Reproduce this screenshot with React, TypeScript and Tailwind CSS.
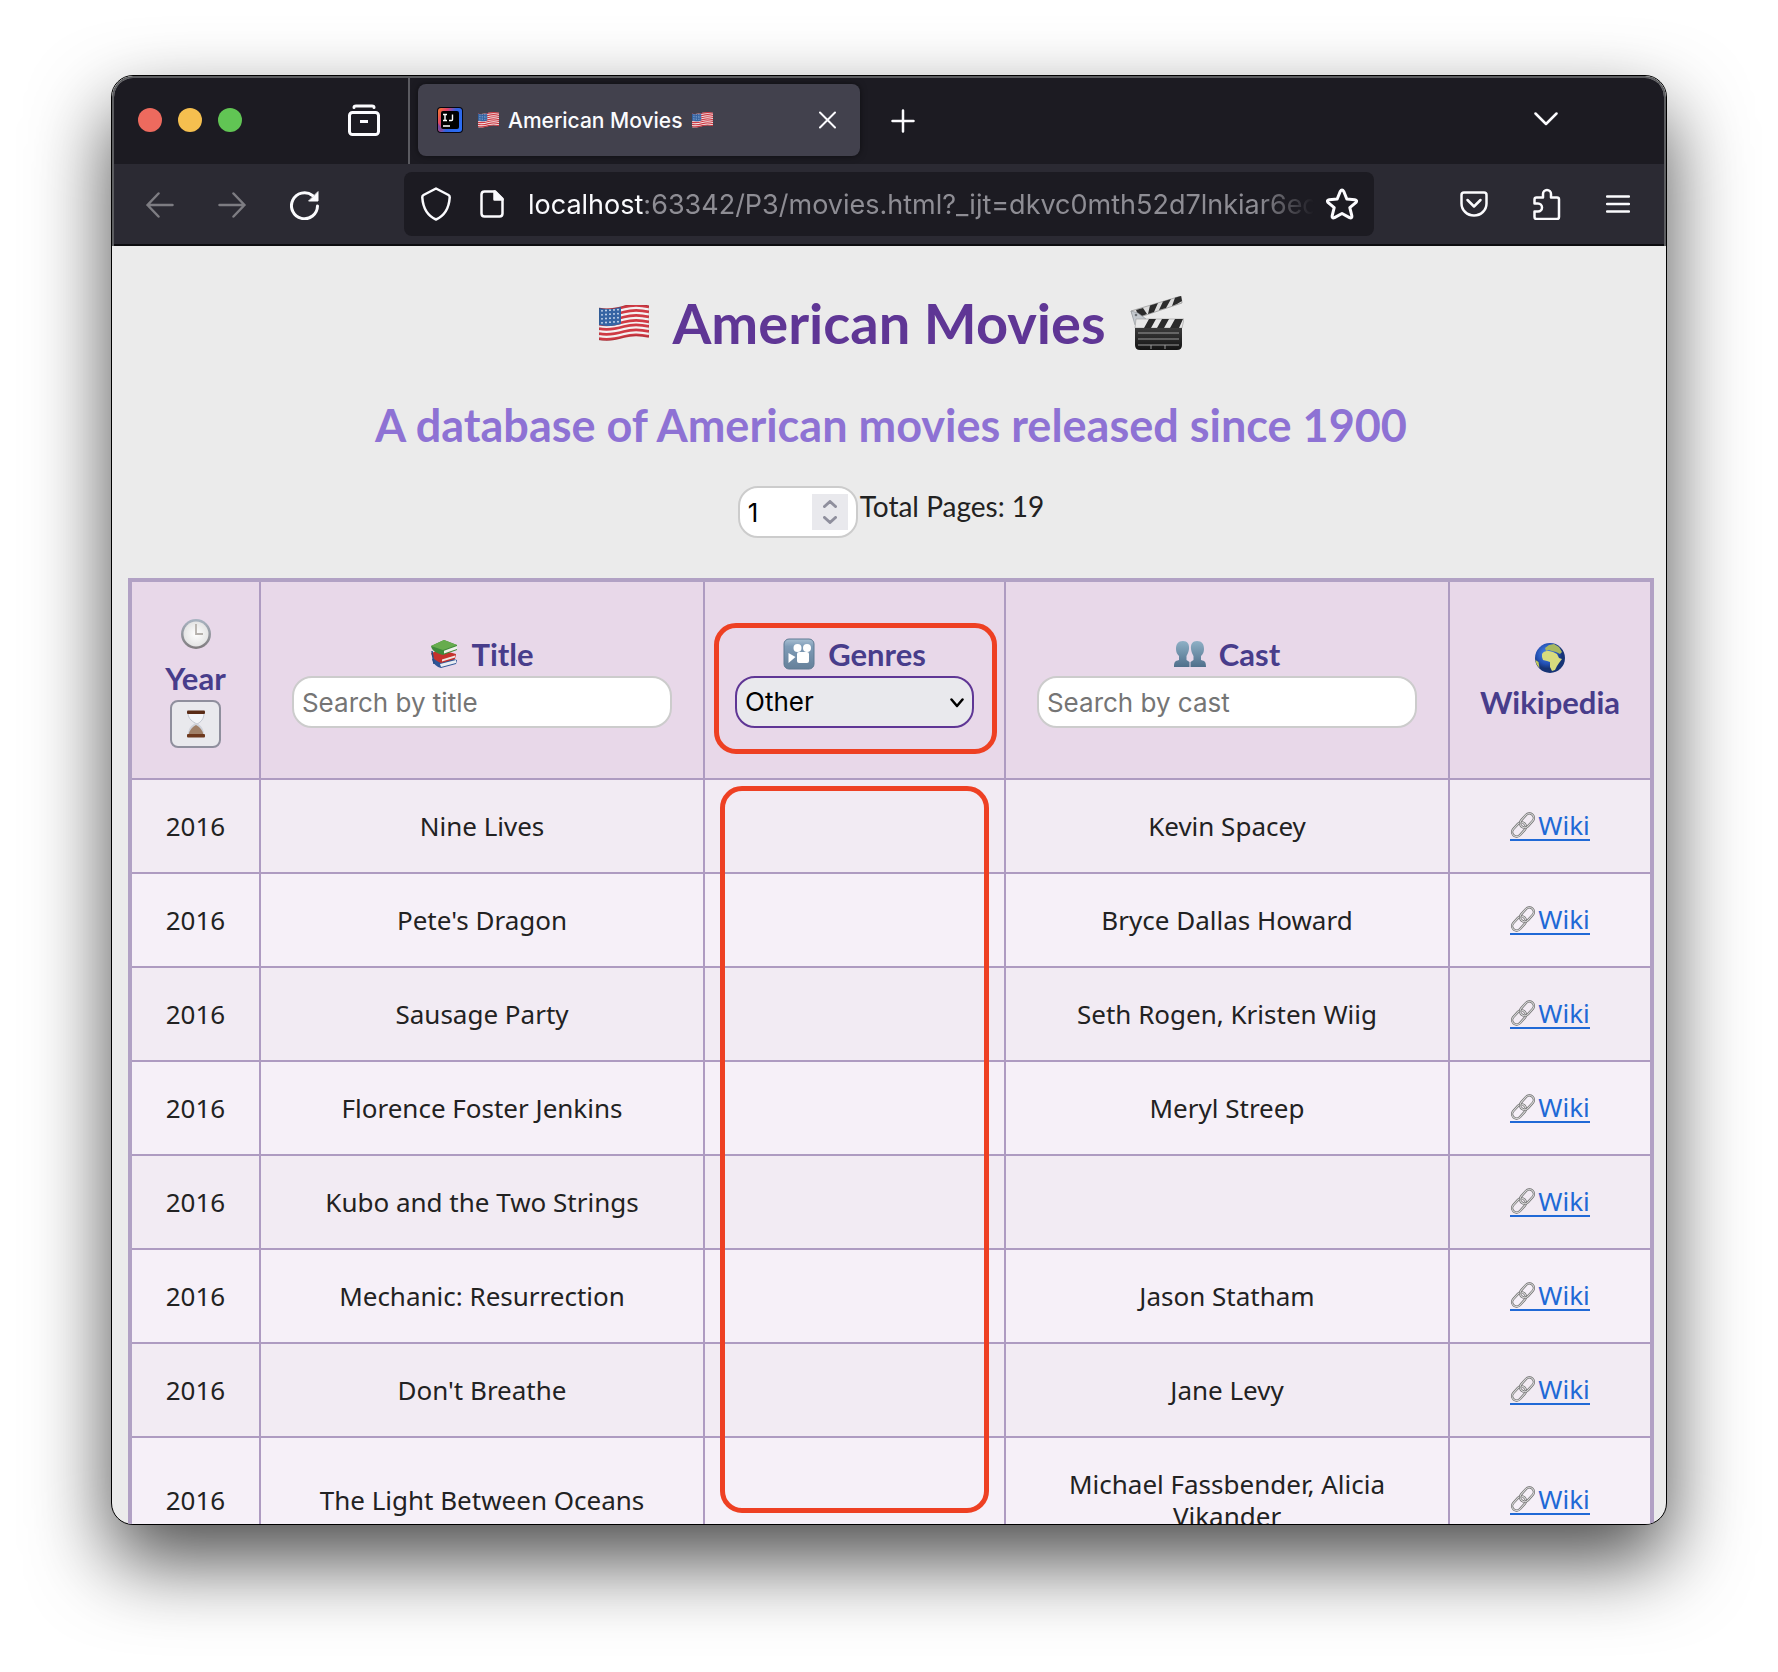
import React from "react";

const COMIC = "font-['Comic_Sans_MS',Lato,sans-serif]";
const UI = "font-[Inter,sans-serif]";

const movies = [
  { title: "Nine Lives", cast: "Kevin Spacey" },
  { title: "Pete's Dragon", cast: "Bryce Dallas Howard" },
  { title: "Sausage Party", cast: "Seth Rogen, Kristen Wiig" },
  { title: "Florence Foster Jenkins", cast: "Meryl Streep" },
  { title: "Kubo and the Two Strings", cast: "" },
  { title: "Mechanic: Resurrection", cast: "Jason Statham" },
  { title: "Don't Breathe", cast: "Jane Levy" },
  { title: "The Light Between Oceans", cast: "Michael Fassbender, Alicia Vikander" },
];

function Stroke({ w, h, children, width = 2, className = "" }: { w: number; h: number; children: React.ReactNode; width?: number; className?: string }) {
  return (
    <svg
      width={w}
      height={h}
      viewBox={`0 0 ${w} ${h}`}
      fill="none"
      stroke="currentColor"
      strokeWidth={width}
      strokeLinecap="round"
      strokeLinejoin="round"
      aria-hidden="true"
      className={`shrink-0 ${className}`}
    >
      {children}
    </svg>
  );
}

function Flag({ className }: { className: string }) {
  const stripe = (x: number, y: number) => `M0 ${y + 3} C ${x} ${y + 5}, 18 ${y + 3}, 25 ${y + 1} S 42 ${y - 1}, 50 ${y + 1}`;
  return (
    <svg viewBox="0 0 50 36" className={className} role="img" aria-label="Flag of the United States">
      <path d="M0 3C8 5 18 3 25 1S42-1 50 1V32C42 30 32 30 25 32S8 37 0 35Z" fill="#f4f1f2" />
      <g fill="none" stroke="#cf3a44" strokeWidth="2.8">
        {[1, 6, 11, 16, 20.5, 25.5, 30.5].map((y) => (
          <path key={y} d={stripe(8, y)} />
        ))}
      </g>
      <path d="M0 3C8 5 15 4 22 2V19C15 21 8 22 0 20Z" fill="#3564a3" />
      <g fill="#d9e4f4">
        {[6, 10, 14, 18].map((y) =>
          [3, 7, 11, 15, 19].map((x) => <circle key={`${x}-${y}`} cx={x} cy={y - x / 14} r="0.9" />)
        )}
      </g>
      <path d="M0 3C8 5 18 3 25 1S42-1 50 1V32C42 30 32 30 25 32S8 37 0 35Z" fill="none" stroke="#00000030" strokeWidth="0.8" />
    </svg>
  );
}

function Clapper() {
  return (
    <svg viewBox="0 0 54 54" className="size-[54px]" role="img" aria-label="Clapper board">
      <defs>
        <linearGradient id="slate" x1="0" y1="0" x2="0" y2="1">
          <stop offset="0" stopColor="#3a3a3a" />
          <stop offset="1" stopColor="#141414" />
        </linearGradient>
      </defs>
      <path d="M1 15 51 0l1 7L4 23Z" fill="#dcdcdc" stroke="#9b9b9b" strokeWidth="0.8" />
      <path d="M6 14l7-2 4 6-8 3ZM20 9.500l8-2.500-4 9-6 2ZM33 5.500l8-2.500-5 9-7 2ZM45 1.800l6-1.800 1 5-5 3-5 2Z" fill="#2b2b2b" />
      <path d="M1 15 8 17 16 23 14 29H5Z" fill="#c4c9ce" stroke="#8a8f94" strokeWidth="0.600" />
      <circle cx="6" cy="19" r="1.300" fill="#6d7277" />
      <circle cx="9" cy="26" r="1.300" fill="#6d7277" />
      <path d="M6 23h48l-2 9H5Z" fill="#e8e8e8" stroke="#9b9b9b" strokeWidth="0.600" />
      <path d="M19 23h7l-5 9h-7ZM32 23h7l-5 9h-7ZM45 23h8l-4 9h-9Z" fill="#2b2b2b" />
      <path d="M5 32h47v17q0 5-5 5H10q-5 0-5-5Z" fill="url(#slate)" />
      <path d="M8 37h41M8 43h41M8 49h41M21 49v4M35 49v4" stroke="#9a9a9a" strokeWidth="1" />
    </svg>
  );
}

function Clock() {
  return (
    <svg viewBox="0 0 32 32" className="size-8" role="img" aria-label="Clock">
      <defs>
        <linearGradient id="clockRim" x1="0" y1="0" x2="0" y2="1">
          <stop offset="0" stopColor="#a9b4c2" />
          <stop offset="1" stopColor="#7f7b7d" />
        </linearGradient>
        <radialGradient id="clockFace">
          <stop offset="0" stopColor="#ffffff" />
          <stop offset="1" stopColor="#e4e4e4" />
        </radialGradient>
      </defs>
      <circle cx="16" cy="16" r="15" fill="url(#clockRim)" />
      <circle cx="16" cy="16" r="12.5" fill="url(#clockFace)" />
      <path d="M16 6v10h7" fill="none" stroke="#b5b1ac" strokeWidth="1.8" />
    </svg>
  );
}

function Hourglass() {
  return (
    <svg viewBox="0 0 20 28" className="h-7 w-5" role="img" aria-label="Sort by year">
      <path d="M2 3h16c0 6-3 9-7 11-4-2-9-5-9-11Z" fill="#f3f5f8" stroke="#b9bec8" strokeWidth="0.8" />
      <path d="M10 13c5 2 8 6 8 12H2c0-6 3-10 8-12Z" fill="#cfd2da" />
      <path d="M10 15c4 2 6.500 5 7.500 10h-15c1-5 3.500-8 7.500-10Z" fill="#a08068" />
      <rect x="1" y="0.500" width="18" height="3.500" rx="1" fill="#5a2c16" />
      <rect x="1" y="24" width="18" height="3.500" rx="1" fill="#6d381d" />
    </svg>
  );
}

function Books() {
  return (
    <svg viewBox="0 0 28 28" className="size-7" role="img" aria-label="Books">
      <path d="M2 19l10-3 15 4-1 4-15 4C7 27 3 24 2 19Z" fill="#2f5596" />
      <path d="M10 24l16-4v3l-15 4Z" fill="#e8edf2" />
      <path d="M1 13l10-3 15 4-1 5-14 4C6 21 2 18 1 13Z" fill="#c5322d" />
      <path d="M12 19.500l13-4v2l-13 4Z" fill="#f2e5e0" />
      <path d="M1 6 14 0l13 5v5l-14 5C6 13 2 11 1 6Z" fill="#3f8a3a" />
      <path d="M1 6 14 0l13 5-14 5Z" fill="#67ac4e" />
      <path d="M14 10.800 27 6v3l-13 4.500Z" fill="#eef2ea" />
      <path d="M2 11l2 13" stroke="#284b86" strokeWidth="1.500" />
    </svg>
  );
}

function Cinema() {
  return (
    <svg viewBox="0 0 32 32" className="size-8" role="img" aria-label="Cinema">
      <defs>
        <linearGradient id="cinemaTile" x1="0" y1="0" x2="0" y2="1">
          <stop offset="0" stopColor="#a8bfd2" />
          <stop offset="0.250" stopColor="#7f9cb7" />
          <stop offset="1" stopColor="#65809a" />
        </linearGradient>
      </defs>
      <rect x="1" y="1" width="30" height="30" rx="5" fill="url(#cinemaTile)" stroke="#5f7a93" />
      <g fill="#fff">
        <circle cx="14.500" cy="10" r="4" />
        <circle cx="24" cy="10" r="4" />
        <rect x="14" y="14" width="12" height="11" rx="2" />
        <path d="M5.500 15l7 4-7 6Z" />
      </g>
    </svg>
  );
}

function People() {
  return (
    <svg viewBox="0 0 32 26" className="h-[26px] w-8" role="img" aria-label="People">
      <defs>
        <linearGradient id="bust" x1="0" y1="0" x2="0" y2="1">
          <stop offset="0" stopColor="#8fb0c6" />
          <stop offset="1" stopColor="#4f6f8b" />
        </linearGradient>
      </defs>
      <path d="M9 0c4.500 0 6.500 3 6 8-.3 3-1.500 5-2.500 7v4l3 2v5H0c0-5 1-6 5-7v-4C3 13 2 11 2 8 2 3 4 0 9 0Z" fill="url(#bust)" />
      <path d="M23 0c-4.500 0-6.500 3-6 8 .3 3 1.500 5 2.500 7v4l-3 2v5H32c0-5-1-6-5-7v-4c2-2 3-4 3-7 0-5-2-8-7-8Z" fill="url(#bust)" />
    </svg>
  );
}

function Globe() {
  return (
    <svg viewBox="0 0 32 32" className="size-8" role="img" aria-label="Globe">
      <defs>
        <radialGradient id="ocean" cx="0.400" cy="0.350">
          <stop offset="0" stopColor="#4f8df0" />
          <stop offset="0.700" stopColor="#2350b4" />
          <stop offset="1" stopColor="#173475" />
        </radialGradient>
      </defs>
      <circle cx="16" cy="16" r="15" fill="url(#ocean)" />
      <path d="M8 12c2-3 4-3 7-3l4 1 4 2 2 4 3 1-3 4-2 3-2 4-3 1-2-4v-5l-3-1-4-1-1-3Z" fill="#d8dc7e" />
      <path d="M11 6l4-3 5-1 5 3 3 5-2 2-4-2-4-1-3-1-3 1Z" fill="#a8b860" />
      <path d="M1.500 18l3 2 1 6c-2-2-4-5-4-8Z" fill="#c3c95a" />
    </svg>
  );
}

function LinkIcon() {
  return (
    <svg viewBox="0 0 26 26" className="size-[26px]" aria-hidden="true">
      <g fill="none" transform="rotate(-48 13 13)">
        <rect x="-1" y="8.500" width="16" height="9" rx="4.500" stroke="#6a6a6a" strokeWidth="2.400" />
        <rect x="-1" y="8.500" width="16" height="9" rx="4.500" stroke="#d8d8d8" strokeWidth="1.100" />
        <rect x="11" y="8.500" width="16" height="9" rx="4.500" stroke="#6a6a6a" strokeWidth="2.400" />
        <rect x="11" y="8.500" width="16" height="9" rx="4.500" stroke="#d8d8d8" strokeWidth="1.100" />
      </g>
    </svg>
  );
}

function Favicon() {
  return (
    <svg viewBox="0 0 26 26" className="size-[26px] shrink-0" aria-hidden="true">
      <defs>
        <linearGradient id="ideaEdge" x1="0" y1="0.200" x2="1" y2="0.700">
          <stop offset="0" stopColor="#f2703a" />
          <stop offset="0.250" stopColor="#e0416b" />
          <stop offset="0.550" stopColor="#2f62e0" />
          <stop offset="1" stopColor="#2a6df5" />
        </linearGradient>
      </defs>
      <rect width="26" height="26" rx="4" fill="#05060f" />
      <rect x="1" y="1" width="24" height="24" rx="3" fill="url(#ideaEdge)" />
      <path d="M1 16l5 8H4q-3 0-3-3Z" fill="#7a4a9c" />
      <rect x="4" y="4" width="18" height="18" rx="2" fill="#000" />
      <path d="M6 7.500h4M8 7.500v6M6 13.500h4M12 13.500h2.500q1 0 1-1v-5M6 19h7" stroke="#fff" strokeWidth="1.400" fill="none" />
    </svg>
  );
}

function TabStrip() {
  return (
    <div className="flex h-[86px] items-stretch bg-[#1c1b22]">
      <div className="flex w-[296px] shrink-0 items-center border-r-2 border-[#5b5b61] pr-7 pb-[2px] pl-6">
        <div className="flex gap-4">
          <button aria-label="Close window" className="size-6 rounded-full bg-[#ed6a5e]" />
          <button aria-label="Minimize window" className="size-6 rounded-full bg-[#f5bf4f]" />
          <button aria-label="Zoom window" className="size-6 rounded-full bg-[#61c554]" />
        </div>
        <button aria-label="Recent browsing" className="ml-auto">
          <Stroke w={32} h={32} width={3}>
            <path d="M6 3.500Q6 2 8 2h16q2 0 2 1.500" />
            <rect x="1.500" y="8.500" width="29" height="22" rx="3" />
            <path d="M12 17.500h8" strokeLinecap="butt" />
          </Stroke>
        </button>
      </div>
      <div className="mt-[6px] mb-2 ml-2 flex w-[442px] items-center rounded-lg bg-[#42414d] pr-6 pl-[19px] shadow-[0_0_6px_rgba(0,0,0,0.5)]">
        <Favicon />
        <span className="ml-[15px] flex items-center gap-[9px] text-[21px] leading-7 font-medium whitespace-nowrap text-[#fbfbfe]">
          <Flag className="h-4 w-[21px]" />
          <span className="pt-[2px]">American Movies</span>
          <Flag className="h-4 w-[21px]" />
        </span>
        <button aria-label="Close tab" className="ml-auto">
          <Stroke w={18} h={18}>
            <path d="M2 1.500l15 15M17 1.500l-15 15" />
          </Stroke>
        </button>
      </div>
      <button aria-label="New tab" className="ml-[31px]">
        <Stroke w={24} h={24} width={2.5}>
          <path d="M12 1.500v21M1.500 12h21" />
        </Stroke>
      </button>
      <button aria-label="List all tabs" className="mr-[106px] mb-1 ml-auto">
        <Stroke w={24} h={14} width={2.5}>
          <path d="M1.500 1.500L12 12 22.500 1.500" />
        </Stroke>
      </button>
    </div>
  );
}

function NavBar() {
  return (
    <div className="flex h-[82px] items-center border-b-2 border-[#0c0c0f] bg-[#2b2a33] pr-[34px] pl-8">
      <div className="flex items-center gap-11 pt-[2px] text-[#fbfbfe]">
        <button aria-label="Back" className="text-[#7d7c82]">
          <Stroke w={28} h={26} width={2.5}>
            <path d="M12.500 1.500L1.500 13l11 11.500M1.500 13h25" />
          </Stroke>
        </button>
        <button aria-label="Forward" className="text-[#7d7c82]">
          <Stroke w={28} h={26} width={2.5}>
            <path d="M15.500 1.500l11 11.500-11 11.500M26.500 13h-25" />
          </Stroke>
        </button>
        <button aria-label="Reload">
          <Stroke w={30} h={30} width={3}>
            <path d="M27.500 16A13 13 0 1 1 22.500 5.500" />
            <path d="M28 2v9h-9Z" fill="currentColor" strokeWidth="1" />
          </Stroke>
        </button>
      </div>
      <div className="mr-[86px] ml-[84px] flex h-16 min-w-0 flex-1 items-center rounded-lg bg-[#1c1b22] pr-4 pl-[17px] text-[#fbfbfe]">
        <Stroke w={30} h={34} width={2.5}>
          <path d="M15 1.500L27.500 8q1.300.7 1.200 2.500C28 21 24 28.500 15 32.500 6 28.500 2 21 1.300 10.500q-.1-1.800 1.200-2.500Z" />
        </Stroke>
        <Stroke w={24} h={28} width={2.5} className="ml-[29px]">
          <path d="M4 1.500h11L22.500 9v14.500q0 3-3 3H4.500q-3 0-3-3V4.500q0-3 3-3Z" />
          <path d="M14.500 1.500V9.500H22.500Z" fill="currentColor" />
        </Stroke>
        <div className="ml-6 min-w-0 flex-1 overflow-hidden mask-r-from-93% pt-[2px] text-[27px] leading-9 whitespace-nowrap">
          localhost<span className="text-[#8e8d94]">:63342/P3/movies.html?_ijt=dkvc0mth52d7lnkiar6ed</span>
        </div>
        <button aria-label="Bookmark this page" className="ml-3">
          <Stroke w={32} h={32} width={3}>
            <path d="M14.200 3.500q1.800-3 3.600 0l3 7.500 8 .8q3 .6 1 2.900l-6 5 2 8q.4 3-2.300 1.900L16 25.500l-7.500 4.100q-2.700 1.100-2.300-1.900l2-8-6-5q-2-2.300 1-2.900l8-.8Z" />
          </Stroke>
        </button>
      </div>
      <div className="flex items-center text-[#fbfbfe]">
        <button aria-label="Save to Pocket">
          <Stroke w={28} h={26} width={2.5}>
            <path d="M4 1.500h20q2.500 0 2.500 2.500v8.500a12.500 12 0 0 1-25 0V4q0-2.500 2.500-2.500Z" />
            <path d="M7.500 9l6.500 6.500L20.500 9" />
          </Stroke>
        </button>
        <button aria-label="Extensions" className="ml-[45px]">
          <Stroke w={28} h={32} width={2.5}>
            <path d="M10 9.500V6a4 4 0 0 1 8 0v3.500h6q2 0 2 2V29q0 2-2 2H3.500q-2 0-2-2v-5.500H5a4 4 0 0 0 0-8H1.500v-4q0-2 2-2Z" />
          </Stroke>
        </button>
        <button aria-label="Open application menu" className="ml-[45px]">
          <Stroke w={24} h={18} width={2.5}>
            <path d="M1 1.500h22M1 9h22M1 16.500h22" />
          </Stroke>
        </button>
      </div>
    </div>
  );
}

const TH = "relative h-[199px] border-2 border-[#ae9bc1] p-0 text-center align-middle";

function SearchInput({ id, placeholder }: { id: string; placeholder: string }) {
  return (
    <input
      id={id}
      type="text"
      placeholder={placeholder}
      className="mx-auto block h-[52px] w-[86%] rounded-[20px] border-2 border-[#cccccc] bg-white px-2 font-[Inter,sans-serif] text-[26px] font-normal text-black placeholder:text-[#757575]"
    />
  );
}

function MovieTable() {
  return (
    <table className="mt-10 w-full table-fixed border-collapse border-4 border-[#b1a1c4] text-[#222222]">
      <colgroup>
        <col className="w-[130px]" />
        <col />
        <col className="w-[301px]" />
        <col />
        <col className="w-[203px]" />
      </colgroup>
      <thead className="bg-[#e8d8e9] text-[31px] leading-[44px] font-bold text-[#483d8b]">
        <tr>
          <th className={TH}>
            <div className="flex h-11 items-center justify-center">
              <Clock />
            </div>
            <div>Year</div>
            <button className="mx-auto flex h-12 w-[51px] items-center justify-center rounded-lg border-2 border-[#8f8f9d] bg-[#e9e9ed]">
              <Hourglass />
            </button>
          </th>
          <th className={TH}>
            <label htmlFor="title" className="flex items-center justify-center gap-[13px]">
              <Books />
              Title
            </label>
            <SearchInput id="title" placeholder="Search by title" />
          </th>
          <th className={TH}>
            <label htmlFor="genres" className="flex items-center justify-center gap-[13px]">
              <Cinema />
              Genres
            </label>
            <div className="relative mx-auto w-[239px]">
              <select
                id="genres"
                className="block h-[52px] w-full appearance-none rounded-[20px] border-2 border-[#5f3695] bg-[#e9e9ed] px-2 font-[Inter,sans-serif] text-[26px] leading-9 font-normal text-black"
              >
                <option>Other</option>
              </select>
              <Stroke w={14} h={10} width={2.5} className="pointer-events-none absolute top-[22px] right-[10px] text-black">
                <path d="M1.500 1.500L7 8l5.500-6.500" />
              </Stroke>
            </div>
            <div className="pointer-events-none absolute top-[41px] right-[7px] bottom-[24px] left-[9px] rounded-[22px] border-5 border-[#ee4023]" />
          </th>
          <th className={TH}>
            <label htmlFor="cast" className="flex items-center justify-center gap-[13px]">
              <People />
              Cast
            </label>
            <SearchInput id="cast" placeholder="Search by cast" />
          </th>
          <th className={TH}>
            <div className="flex h-11 items-center justify-center">
              <Globe />
            </div>
            <div>Wikipedia</div>
          </th>
        </tr>
      </thead>
      <tbody className="font-['Comic_Sans_MS','Noto_Sans',sans-serif] text-[26px] leading-8">
        {movies.map((m, i) => (
          <tr key={m.title} className="odd:bg-[#f2ebf3] even:bg-[#f6f0f8]">
            <td className="border-2 border-[#ae9bc1] py-[30px] text-center">2016</td>
            <td className="border-2 border-[#ae9bc1] px-7 py-[30px] text-center">{m.title}</td>
            <td className="relative border-2 border-[#ae9bc1]">
              {i === 0 && (
                <div className="pointer-events-none absolute inset-x-[15px] top-[6px] h-[727px] rounded-[22px] border-5 border-[#ee4023]" />
              )}
            </td>
            <td className="border-2 border-[#ae9bc1] px-7 py-[30px] text-center">{m.cast}</td>
            <td className="border-2 border-[#ae9bc1]">
              <a href="#" className="mx-auto flex w-fit items-center gap-[2px] border-b-2 border-[#2069d6] leading-7 text-[#2069d6]">
                <LinkIcon />
                Wiki
              </a>
            </td>
          </tr>
        ))}
      </tbody>
    </table>
  );
}

export default function App() {
  return (
    <div className="flex h-screen bg-white px-[111px] pt-[75px] pb-[147px]">
      <div className="flex min-w-0 flex-1 flex-col overflow-hidden rounded-[22px] border border-black bg-[#ebebeb] shadow-[0_36px_80px_rgba(0,0,0,0.7)]">
        <header className={`shrink-0 overflow-hidden rounded-t-[21px] border-x-2 border-t-2 border-[#5c5d60] text-[#fbfbfe] ${UI}`}>
          <TabStrip />
          <NavBar />
        </header>
        <main className={`min-h-0 flex-1 overflow-hidden pr-3 pl-4 ${COMIC}`}>
          <h1 className="mt-[41px] flex items-center justify-center gap-6 text-[56px] leading-[72px] font-bold text-[#5f3695]">
            <Flag className="h-9 w-[50px]" />
            American Movies
            <Clapper />
          </h1>
          <h2 className="mt-[38px] text-center text-[45px] leading-[56px] font-bold text-[#8e72d4]">
            A database of American movies released since 1900
          </h2>
          <div className="mt-[33px] flex items-start justify-center gap-[2px]">
            <div className="flex h-[52px] w-[120px] items-center rounded-[20px] border-2 border-[#cccccc] bg-white px-2">
              <input
                type="number"
                aria-label="Page"
                defaultValue={1}
                className="min-w-0 flex-1 [appearance:textfield] bg-transparent font-[Inter,sans-serif] text-[26px] text-black outline-none [&::-webkit-inner-spin-button]:appearance-none"
              />
              <div className="flex h-9 w-9 shrink-0 flex-col items-center justify-center gap-2 bg-[#e9e9ed] text-[#8f8f9d]">
                <Stroke w={14} h={8} width={3}>
                  <path d="M1.500 6.500L7 1.500l5.500 5" />
                </Stroke>
                <Stroke w={14} h={8} width={3}>
                  <path d="M1.500 1.500L7 6.500l5.500-5" />
                </Stroke>
              </div>
            </div>
            <span className="pt-[2px] text-[28px] leading-9 text-[#222222]">Total Pages: 19</span>
          </div>
          <MovieTable />
        </main>
      </div>
    </div>
  );
}
